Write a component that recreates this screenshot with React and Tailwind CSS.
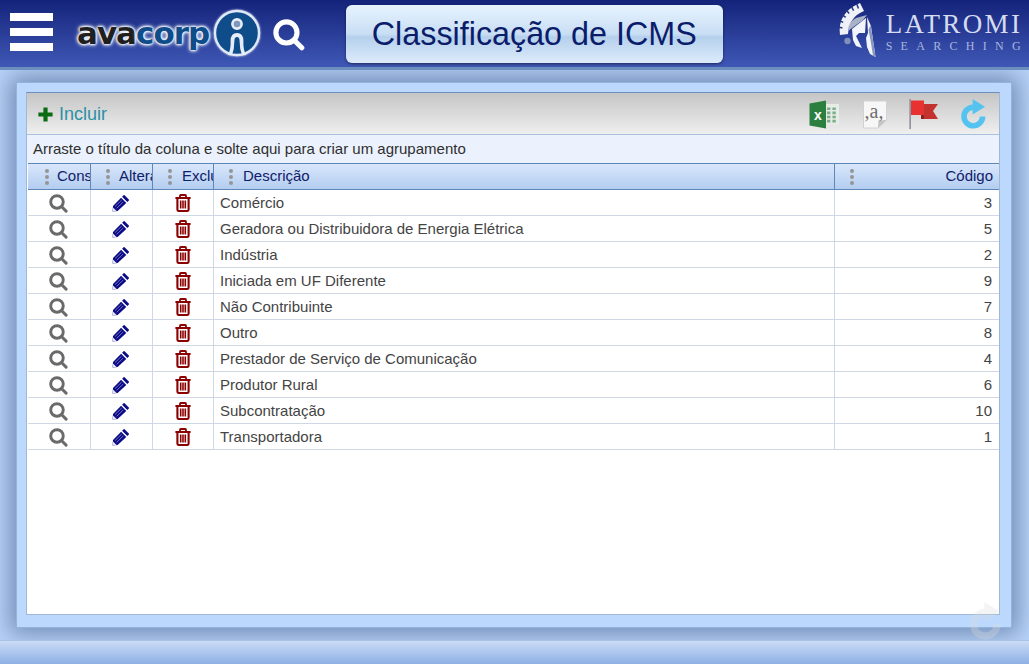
import React from "react";

const rows = [
  ["Comércio", 3],
  ["Geradora ou Distribuidora de Energia Elétrica", 5],
  ["Indústria", 2],
  ["Iniciada em UF Diferente", 9],
  ["Não Contribuinte", 7],
  ["Outro", 8],
  ["Prestador de Serviço de Comunicação", 4],
  ["Produtor Rural", 6],
  ["Subcontratação", 10],
  ["Transportadora", 1],
];

const SearchIcon = ({ size = 20, color = "#6a6a6a", sw = 3.1 }) => (
  <svg width={size} height={size} viewBox="0 0 20 20" fill="none">
    <circle cx="8.4" cy="8.4" r="6.6" stroke={color} strokeWidth={sw} />
    <path d="M13.4 13.4 L18 18" stroke={color} strokeWidth={sw} strokeLinecap="round" />
  </svg>
);

const PencilIcon = () => (
  <svg width="18" height="18" viewBox="0 0 18 18">
    <path d="M12.6 1.2 L16.8 5.4 Q17.2 5.9 16.8 6.4 L15.3 7.9 L10.1 2.7 L11.6 1.2 Q12.1 0.8 12.6 1.2Z" fill="#0b0b86" />
    <path d="M9.1 3.7 L14.3 8.9 L5.6 17 L0.6 17.6 L1 12 Z" fill="#0b0b86" />
    <path d="M3 12.6 L9.6 6.2 M4.6 14.4 L11.2 8" stroke="#8c8cd0" strokeWidth="0.8" />
    <path d="M1 13.4 L4.6 17 L0.7 17.6Z" fill="#e8e8f6" />
  </svg>
);

const TrashIcon = () => (
  <svg width="16" height="18" viewBox="0 0 16 18" fill="none">
    <path d="M0.4 4 H15.6" stroke="#8b0000" strokeWidth="2" />
    <path d="M5 3.6 V1.8 Q5 1 5.8 1 H10.2 Q11 1 11 1.8 V3.6" stroke="#8b0000" strokeWidth="1.8" />
    <path d="M2.4 4 V15.4 Q2.4 17 4 17 H12 Q13.6 17 13.6 15.4 V4" stroke="#8b0000" strokeWidth="2.1" />
    <path d="M5.7 6.5 V14.5 M8 6.5 V14.5 M10.3 6.5 V14.5" stroke="#8b0000" strokeWidth="1.6" />
  </svg>
);

const RefreshIcon = ({ color = "#55c3f0", size = 30 }) => (
  <svg width={size} height={size} viewBox="0 0 30 30" fill="none">
    <path d="M15.5 8.2 A 9.3 9.3 0 1 0 24.6 17.5" stroke={color} strokeWidth="5.6" />
    <path d="M14.6 0 L27 7.8 L14.6 15.4 Z" fill={color} />
  </svg>
);

const ExcelIcon = () => (
  <svg width="30" height="29" viewBox="0 0 30 29">
    <rect x="12" y="4" width="18" height="21" fill="#e6ece6" />
    <path d="M18 7.5h3.4v2.6h-3.4zM23.4 7.5h3.4v2.6h-3.4zM18 11.6h3.4v2.6h-3.4zM23.4 11.6h3.4v2.6h-3.4zM18 15.7h3.4v2.6h-3.4zM23.4 15.7h3.4v2.6h-3.4zM18 19.8h3.4v2.6h-3.4zM23.4 19.8h3.4v2.6h-3.4z" fill="#7fae8b" />
    <path d="M0.5 3.5 L17 0.5 V28.5 L0.5 25.5 Z" fill="#2b8040" />
    <text x="5" y="19.5" fill="#fff" fontFamily="'Liberation Sans', sans-serif" fontSize="14" fontWeight="700">x</text>
  </svg>
);

const AIcon = () => (
  <svg width="26" height="29" viewBox="0 0 26 29">
    <path d="M1.5 1 H24.5 V20 L16 28 H1.5 Z" fill="#f7f7f7" stroke="#d2d2d2" />
    <path d="M24.5 20 L16.5 20.5 L16 28 Z" fill="#c4c4c4" />
    <text x="2.5" y="18" fill="#6f6f6f" fontFamily="'Liberation Serif', serif" fontSize="20">,a,</text>
  </svg>
);

const FlagIcon = () => (
  <svg width="30" height="30" viewBox="0 0 30 30">
    <rect x="0.4" y="0" width="1.5" height="30" fill="#8a8a9a" />
    <path d="M15 5 H29 L24 12 L29 20 H12 Z" fill="#c4322f" />
    <path d="M2 1.5 H15 V16 H2 Z" fill="#e83232" />
    <path d="M12 16 H15 V20 H12Z" fill="#8f1f1f" />
  </svg>
);

const Grip = () => (
  <span className="flex flex-col gap-[2px] shrink-0">
    <span className="w-[4px] h-[4px] rounded-full bg-[#959595]" />
    <span className="w-[4px] h-[4px] rounded-full bg-[#959595]" />
    <span className="w-[4px] h-[4px] rounded-full bg-[#959595]" />
  </span>
);

const HeadCell = ({ w, label, pl, gap = "gap-[9px]", right }) => (
  <div className={`${w} ${pl} ${gap} h-full shrink-0 flex items-center overflow-hidden border-r border-[#5f86b8] last:border-r-0`}>
    <Grip />
    <span className={`text-[15px] text-[#10206a] whitespace-nowrap ${right ? "ml-auto pr-[7px]" : ""}`}>{label}</span>
  </div>
);

const Helmet = () => (
  <svg width="52" height="62" viewBox="0 0 52 62">
    <path d="M5 35 Q2 13 25 3 L29 11 Q14 17 13 34 Z" fill="#eef1f8" />
    <path d="M7.4 28 L3.6 27 M8.2 22.4 L4.4 20.6 M10.6 17.4 L7.2 14.6 M14.2 13.6 L11.2 10 M18.6 10.6 L16.4 6.4 M23.4 8.6 L21.8 4" stroke="#26387e" strokeWidth="1.5" />
    <path d="M13 31 Q13 22 21 18 L32 15 L28 20 L17 28 Z" fill="#a9b2c6" />
    <path d="M17 29 L31 18 L30 33 L24 33 L21 36 L24 42 L27 48 L21 46 L18 40 Z" fill="#f1f4fa" />
    <path d="M32 17 L36 26 L38 40 L40.5 57 L35 54 L32 47 L31 38 L33 33 Z" fill="#f1f4fa" />
    <path d="M35.5 25 L38 40 L40.5 57 L38 55.5 L35.5 40 L33.5 30 Z" fill="#8795bf" />
    <circle cx="12.5" cy="41" r="3.2" fill="#7f8fba" />
  </svg>
);

export default function App() {
  return (
    <div className="relative w-[1029px] h-[664px] overflow-hidden flex flex-col bg-[#b9d4f9] font-['Liberation_Sans',Arial,sans-serif]">
      <header className="h-[70px] shrink-0 flex items-start border-b-[3px] border-[#6d8fc0] bg-[linear-gradient(#14237a,#3f58b6)] z-10">
        <div className="ml-[10px] mt-[13px] w-[43px] flex flex-col gap-[7px]">
          <div className="h-[8px] bg-white" />
          <div className="h-[8px] bg-white" />
          <div className="h-[8px] bg-white" />
        </div>
        <div className="ml-[24px] mt-[8px] h-[50px] w-[187px] flex items-center">
          <span className="w-[135px] shrink-0 text-[31px] font-bold leading-none tracking-[-1px] font-['DejaVu_Sans',sans-serif] [text-shadow:0_0_2px_#f4f7fd,0_0_2px_#f4f7fd,0_0_3px_#f4f7fd,0_0_4px_#f4f7fd,0_0_5px_#dfe8f7]">
            <span className="text-[#1f1f1f]">ava</span>
            <span className="text-[#0f4c8a]">corp</span>
          </span>
          <svg className="shrink-0 mt-[-1px] drop-shadow-[0_0_1px_#e6edf9]" width="50" height="48" viewBox="0 0 50 48">
            <circle cx="25" cy="24" r="22" fill="#0f4c8a" stroke="#dfe8f7" strokeWidth="2.4" />
            <circle cx="25" cy="15" r="4.6" fill="#7f97b8" stroke="#e6edf9" strokeWidth="2.6" />
            <path d="M16 46 Q19 40 18.6 32 Q18.6 24 25 24 Q31.4 24 31.4 32 Q31 40 34 46 L30 46 Q27.6 40 27.6 32 Q27.6 28 25 28 Q22.4 28 22.4 32 Q22.4 40 20 46 Z" fill="#e6edf9" />
          </svg>
        </div>
        <div className="ml-[9px] mt-[19px]">
          <SearchIcon size={32} color="#fff" sw={3.2} />
        </div>
        <div className="ml-[41px] mt-[5px] w-[377px] h-[58px] rounded-[6px] flex items-center justify-center text-[32.3px] text-[#0b1c6b] bg-[linear-gradient(#e6f3fe_0%,#c9def4_50%,#b5d0ec_55%,#dcebfb_100%)] shadow-[0_1px_3px_rgba(0,0,0,.5)]">
          Classificação de ICMS
        </div>
        <div className="ml-[112px] shrink-0">
          <Helmet />
        </div>
        <div className="ml-[-1px] mt-[11px] flex flex-col font-['Liberation_Serif',serif] text-[#d5dcef] leading-none whitespace-nowrap">
          <span className="text-[27px] tracking-[2.4px]">LATROMI</span>
          <span className="mt-[2px] text-[12px] tracking-[8.3px] text-[#a9b6dc]">SEARCHING</span>
        </div>
      </header>

      <main className="flex-1 min-h-0 pt-[12px] pl-[16px] pb-[12px] bg-[#b9d4f9]">
        <div className="w-[996px] h-full bg-[#bcd9fd] border border-[#92b3dc] pl-[9px] pr-[11px] pt-[9px] pb-[12px] shadow-[0_0_22px_6px_rgba(55,80,125,.55)]">
          <div className="h-full bg-white border border-[#9fb8d6] border-t-[#6d8fc0] flex flex-col">
            <div className="h-[42px] shrink-0 pt-[1px] flex items-center border-b border-[#a9c1de] bg-[linear-gradient(#c5c5c5,#efefef)]">
              <svg className="ml-[11px]" width="15" height="15" viewBox="0 0 15 15">
                <path d="M5.4 0.5 H9.6 V5.4 H14.6 V9.6 H9.6 V14.5 H5.4 V9.6 H0.4 V5.4 H5.4 Z" fill="#0b6b12" />
              </svg>
              <span className="ml-[6px] text-[18px] text-[#2d8fa5]">Incluir</span>
              <div className="ml-auto flex items-center mr-[11px]">
                <ExcelIcon />
                <span className="ml-[23px]"><AIcon /></span>
                <span className="ml-[21px]"><FlagIcon /></span>
                <span className="ml-[19px]"><RefreshIcon /></span>
              </div>
            </div>
            <div className="h-[28px] shrink-0 flex items-center pl-[6px] pt-[1px] bg-[#ebf2fd] text-[15px] text-[#2f2f2f]">
              Arraste o título da coluna e solte aqui para criar um agrupamento
            </div>
            <div className="h-[27px] shrink-0 pl-[1px] bg-white">
              <div className="h-full flex border-y border-[#5f86b8] bg-[linear-gradient(#d9e7fb,#b3cdf0)]">
                <HeadCell w="w-[63px]" pl="pl-[17px]" gap="gap-[8px]" label="Consultar" />
                <HeadCell w="w-[62px]" pl="pl-[15px]" label="Alterar" />
                <HeadCell w="w-[61px]" pl="pl-[15px]" gap="gap-[10px]" label="Excluir" />
                <HeadCell w="w-[621px]" pl="pl-[15px]" gap="gap-[10px]" label="Descrição" />
                <HeadCell w="w-[165px]" pl="pl-[15px]" label="Código" right />
              </div>
            </div>
            <div className="flex-1 min-h-0 pl-[1px]">
              {rows.map(([name, code]) => (
                <div key={name} className="h-[26px] flex border-b border-[#cdd8e4] text-[15px] text-[#444]">
                  <div className="w-[63px] shrink-0 flex items-center justify-center pt-[1px] pr-[1px] border-r border-[#cdd8e4]"><SearchIcon size={19} /></div>
                  <div className="w-[62px] shrink-0 flex items-center justify-center pt-[1px] pr-[1px] border-r border-[#cdd8e4]"><PencilIcon /></div>
                  <div className="w-[61px] shrink-0 flex items-center justify-center pt-[1px] border-r border-[#cdd8e4]"><TrashIcon /></div>
                  <div className="w-[621px] shrink-0 flex items-center pt-[1px] pl-[6px] border-r border-[#cdd8e4]">{name}</div>
                  <div className="flex-1 flex items-center justify-end pt-[1px] pr-[7px]">{code}</div>
                </div>
              ))}
            </div>
          </div>
        </div>
      </main>

      <footer className="h-[24px] shrink-0 border-t border-[#a9c2e6] bg-[linear-gradient(#cadcf6,#8fb0e5)] z-10" />

      <div className="absolute left-[966px] top-[602px] z-20 opacity-30">
        <RefreshIcon color="#dcdcdc" size={38} />
      </div>
    </div>
  );
}
